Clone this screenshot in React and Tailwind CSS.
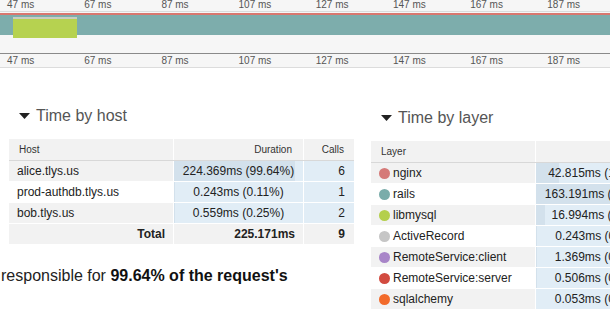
import React from "react";

const ticks = ["47 ms", "67 ms", "87 ms", "107 ms", "127 ms", "147 ms", "167 ms", "187 ms"];

const hosts = [
  { name: "alice.tlys.us", ms: 224.369, pct: 99.64, calls: 6, bg: "bg-[#f2f2f2]" },
  { name: "prod-authdb.tlys.us", ms: 0.243, pct: 0.11, calls: 1, bg: "bg-white" },
  { name: "bob.tlys.us", ms: 0.559, pct: 0.25, calls: 2, bg: "bg-[#f2f2f2]" },
];

const layers = [
  { name: "nginx", ms: 42.815, pct: 19.01, calls: 1, dot: "bg-[#d57a78]", bg: "bg-[#f2f2f2]" },
  { name: "rails", ms: 163.191, pct: 72.47, calls: 1, dot: "bg-[#7aacaa]", bg: "bg-white" },
  { name: "libmysql", ms: 16.994, pct: 7.55, calls: 6, dot: "bg-[#b4cf4c]", bg: "bg-[#f2f2f2]" },
  { name: "ActiveRecord", ms: 0.243, pct: 0.11, calls: 1, dot: "bg-[#c6c6c6]", bg: "bg-white" },
  { name: "RemoteService:client", ms: 1.369, pct: 0.61, calls: 1, dot: "bg-[#a885c8]", bg: "bg-[#f2f2f2]" },
  { name: "RemoteService:server", ms: 0.506, pct: 0.22, calls: 1, dot: "bg-[#d24b40]", bg: "bg-white" },
  { name: "sqlalchemy", ms: 0.053, pct: 0.02, calls: 1, dot: "bg-[#f26b2b]", bg: "bg-[#f2f2f2]" },
];

function TickRow({ className }) {
  return (
    <div className={`flex pl-[7px] text-[10px] leading-[10px] text-[#555] ${className}`}>
      {ticks.map((t) => (
        <div key={t} className="w-[77.2px] shrink-0">
          {t}
        </div>
      ))}
    </div>
  );
}

function Heading({ children }) {
  return (
    <div className="flex items-center h-[20px] gap-[6px] text-[16px] text-[#555]">
      <svg width="11" height="6" viewBox="0 0 11 6">
        <polygon points="0,0 11,0 5.5,6" fill="#222" />
      </svg>
      <span>{children}</span>
    </div>
  );
}

function DurationCell({ ms, pct }) {
  return (
    <div className="relative bg-[#e1edf6] flex items-center justify-center">
      <div
        className="absolute left-0 top-0 bottom-0 bg-[#d3e1ec]"
        style={{ width: `calc((100% - 8px) * ${pct / 100})` }}
      />
      <span className="relative">
        {ms.toFixed(3)}ms ({pct.toFixed(2)}%)
      </span>
    </div>
  );
}

function TableHead({ label }) {
  return (
    <div className="grid grid-cols-[164px_129px_50px] gap-x-px h-[22px] bg-white border-b border-[#d8d8d8] text-[10px] text-[#333]">
      <div className="bg-[#f2f2f2] flex items-center pl-[10px]">{label}</div>
      <div className="bg-[#f2f2f2] flex items-center justify-end pr-[11px]">Duration</div>
      <div className="bg-[#f2f2f2] flex items-center justify-end pr-[10px]">Calls</div>
    </div>
  );
}

export default function App() {
  return (
    <div className="w-[610px] h-[310px] overflow-hidden bg-white font-['Liberation_Sans',Arial,sans-serif]">
      {/* Timeline */}
      <div className="bg-[#f6f6f6]">
        <TickRow className="h-[11px]" />
        <div className="h-px bg-[#dcdcdc]" />
        <div className="h-px" />
        <div className="h-[2px] bg-[#d9776f]" />
        <div className="relative h-[20px] bg-[#7dadac]">
          <div className="absolute left-[13px] top-[2px] w-[64px] h-[21px] border-t-2 border-[#c9cdc2] bg-[#b6d250]" />
        </div>
        <div className="h-[18px]" />
        <div className="h-px bg-[#8a8a8a]" />
        <TickRow className="h-[13px] pt-[2px]" />
        <div className="h-px bg-[#dcdcdc]" />
      </div>

      <div className="flex pt-[38px]">
        {/* Time by host */}
        <div className="w-[371px] shrink-0">
          <div className="pl-[19px]">
            <Heading>Time by host</Heading>
          </div>
          <div className="ml-[9px] mt-[13px] w-[345px] text-[12px] text-[#222]">
            <TableHead label="Host" />
            {hosts.map((h) => (
              <div key={h.name} className="grid grid-cols-[164px_129px_50px] gap-x-px h-[20px] mb-px bg-white">
                <div className={`${h.bg} flex items-center pl-[8px]`}>{h.name}</div>
                <DurationCell ms={h.ms} pct={h.pct} />
                <div className="bg-[#e1edf6] flex items-center justify-end pr-[9px]">{h.calls}</div>
              </div>
            ))}
            <div className="grid grid-cols-[164px_129px_50px] gap-x-px h-[20px] bg-white font-bold">
              <div className="bg-[#f2f2f2] flex items-center justify-end pr-[8px]">Total</div>
              <div className="bg-[#f2f2f2] flex items-center justify-end pr-[8px]">225.171ms</div>
              <div className="bg-[#f2f2f2] flex items-center justify-end pr-[9px]">9</div>
            </div>
          </div>
          <p className="mt-[22px] pl-px text-[16px] leading-[20px] text-[#222] whitespace-nowrap">
            responsible for <b className="text-[#111]">99.64% of the request's</b>
          </p>
        </div>

        {/* Time by layer */}
        <div className="shrink-0 pt-[2px]">
          <div className="pl-[10px]">
            <Heading>Time by layer</Heading>
          </div>
          <div className="mt-[13px] w-[345px] text-[12px] text-[#222]">
            <TableHead label="Layer" />
            {layers.map((l) => (
              <div key={l.name} className="grid grid-cols-[164px_129px_50px] gap-x-px h-[20px] mb-px bg-white">
                <div className={`${l.bg} flex items-center pl-[8px] gap-[3px]`}>
                  <span className={`w-[11px] h-[11px] rounded-full ${l.dot}`} />
                  {l.name}
                </div>
                <DurationCell ms={l.ms} pct={l.pct} />
                <div className="bg-[#e1edf6] flex items-center justify-end pr-[9px]">{l.calls}</div>
              </div>
            ))}
          </div>
        </div>
      </div>
    </div>
  );
}
